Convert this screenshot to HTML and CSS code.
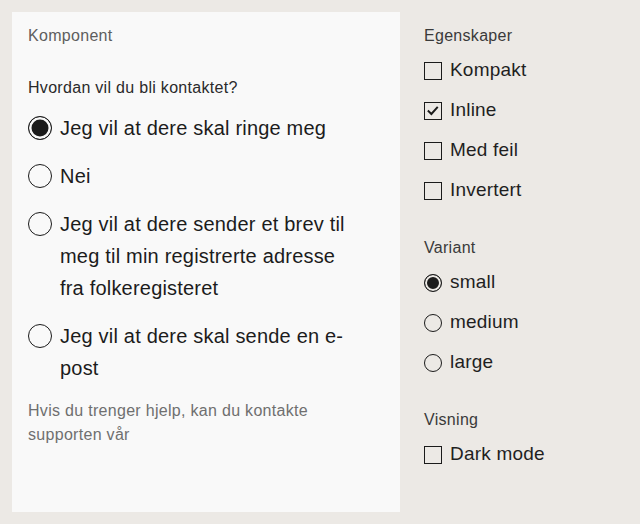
FILE: index.html
```html
<!DOCTYPE html>
<html lang="no">
<head>
<meta charset="utf-8">
<title>Komponent</title>
<link rel="stylesheet" href="styles.css">
</head>
<body>
<div class="layout">
  <section class="panel">
    <div class="panel-title">Komponent</div>
    <fieldset class="group">
      <legend class="question">Hvordan vil du bli kontaktet?</legend>
      <div class="options">
        <label class="option"><input type="radio" name="kontakt" class="radio" checked><span class="option-text">Jeg vil at dere skal ringe meg</span></label>
        <label class="option"><input type="radio" name="kontakt" class="radio"><span class="option-text">Nei</span></label>
        <label class="option"><input type="radio" name="kontakt" class="radio"><span class="option-text">Jeg vil at dere sender et brev til meg til min registrerte adresse fra folkeregisteret</span></label>
        <label class="option"><input type="radio" name="kontakt" class="radio"><span class="option-text">Jeg vil at dere skal sende en e-post</span></label>
      </div>
      <p class="description">Hvis du trenger hjelp, kan du kontakte supporten vår</p>
    </fieldset>
  </section>

  <aside class="controls">
    <div class="ctl-group">
      <div class="ctl-title">Egenskaper</div>
      <label class="ctl"><span class="box"></span><span>Kompakt</span></label>
      <label class="ctl"><span class="box is-checked"><svg viewBox="0 0 18 18" width="16" height="16"><path d="M4 9.2 L7.2 12.4 L13.6 5.2" fill="none" stroke="#1b1b1b" stroke-width="2.2" stroke-linecap="square"/></svg></span><span>Inline</span></label>
      <label class="ctl"><span class="box"></span><span>Med feil</span></label>
      <label class="ctl"><span class="box"></span><span>Invertert</span></label>
    </div>
    <div class="ctl-group">
      <div class="ctl-title">Variant</div>
      <label class="ctl"><span class="dot is-checked"></span><span>small</span></label>
      <label class="ctl"><span class="dot"></span><span>medium</span></label>
      <label class="ctl"><span class="dot"></span><span>large</span></label>
    </div>
    <div class="ctl-group">
      <div class="ctl-title">Visning</div>
      <label class="ctl"><span class="box"></span><span>Dark mode</span></label>
    </div>
  </aside>
</div>
</body>
</html>
```

FILE: styles.css
```css
* { box-sizing: border-box; }

html, body {
  margin: 0;
  height: 100%;
}

body {
  background: #ece9e5;
  font-family: "Liberation Sans", Arial, sans-serif;
  color: #1c1c1c;
}

.layout {
  display: flex;
  gap: 24px;
  padding: 12px;
}

.panel {
  width: 388px;
  height: 500px;
  background: #f9f9f9;
  padding: 12px 16px;
}

.panel-title {
  font-size: 16px;
  line-height: 24px;
  letter-spacing: 0.3px;
  color: #5e5e5e;
}

.group {
  border: 0;
  margin: 28px 0 0;
  padding: 0;
  min-width: 0;
}

.question {
  padding: 0;
  font-size: 16px;
  line-height: 24px;
  letter-spacing: 0.3px;
  color: #2a2a2a;
}

.options {
  display: flex;
  flex-direction: column;
  gap: 16px;
  margin-top: 12px;
}

.option {
  display: flex;
  align-items: flex-start;
  gap: 8px;
  font-size: 20px;
  line-height: 32px;
  letter-spacing: 0.2px;
}

.option-text {
  max-width: 300px;
}

.radio {
  appearance: none;
  -webkit-appearance: none;
  margin: 4px 0 0;
  width: 24px;
  height: 24px;
  flex: none;
  border: 1.5px solid #1b1b1b;
  border-radius: 50%;
  background: transparent;
}

.radio:checked {
  background: #1b1b1b;
  box-shadow: inset 0 0 0 2.5px #f9f9f9;
}

.description {
  margin: 15px 0 0;
  max-width: 300px;
  font-size: 16px;
  line-height: 24px;
  letter-spacing: 0.3px;
  color: #6f6f6f;
}

.controls {
  display: flex;
  flex-direction: column;
  gap: 34px;
  padding-top: 12px;
}

.ctl-group {
  display: flex;
  flex-direction: column;
  gap: 10px;
}

.ctl-group .ctl + .ctl {
  margin-top: 6px;
}

.ctl-title {
  font-size: 16px;
  line-height: 24px;
  letter-spacing: 0.3px;
  color: #3a3a3a;
}

.ctl {
  display: flex;
  align-items: center;
  gap: 8px;
  font-size: 19px;
  line-height: 24px;
  letter-spacing: 0.2px;
  color: #1f1f1f;
}

.box {
  width: 18px;
  height: 18px;
  border: 1.5px solid #1b1b1b;
  display: flex;
  align-items: center;
  justify-content: center;
  flex: none;
  margin-top: 2px;
}

.dot {
  width: 18px;
  height: 18px;
  border: 1.5px solid #1b1b1b;
  border-radius: 50%;
  flex: none;
  margin-top: 2px;
}

.dot.is-checked {
  background: #1b1b1b;
  box-shadow: inset 0 0 0 2px #ece9e5;
}
```
